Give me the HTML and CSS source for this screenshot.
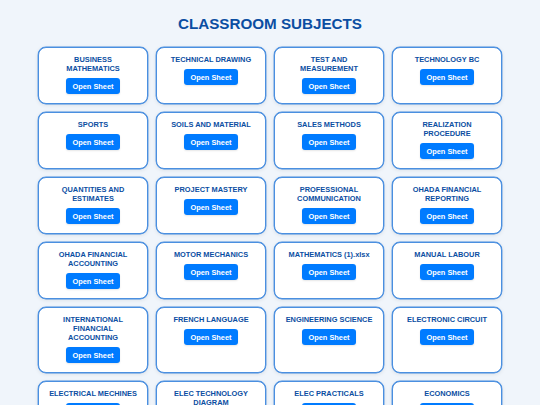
FILE: index.html
```html
<!DOCTYPE html>
<html>
<head>
<meta charset="utf-8">
<link rel="stylesheet" href="styles.css">
</head>
<body>
<h1 class="title">CLASSROOM SUBJECTS</h1>
<div class="grid">
  <div class="card"><div class="name">BUSINESS MATHEMATICS</div><button class="btn">Open Sheet</button></div>
  <div class="card"><div class="name">TECHNICAL DRAWING</div><button class="btn">Open Sheet</button></div>
  <div class="card"><div class="name">TEST AND MEASUREMENT</div><button class="btn">Open Sheet</button></div>
  <div class="card"><div class="name">TECHNOLOGY BC</div><button class="btn">Open Sheet</button></div>
  <div class="card"><div class="name">SPORTS</div><button class="btn">Open Sheet</button></div>
  <div class="card"><div class="name">SOILS AND MATERIAL</div><button class="btn">Open Sheet</button></div>
  <div class="card"><div class="name">SALES METHODS</div><button class="btn">Open Sheet</button></div>
  <div class="card"><div class="name">REALIZATION PROCEDURE</div><button class="btn">Open Sheet</button></div>
  <div class="card"><div class="name">QUANTITIES AND ESTIMATES</div><button class="btn">Open Sheet</button></div>
  <div class="card"><div class="name">PROJECT MASTERY</div><button class="btn">Open Sheet</button></div>
  <div class="card"><div class="name">PROFESSIONAL COMMUNICATION</div><button class="btn">Open Sheet</button></div>
  <div class="card"><div class="name">OHADA FINANCIAL REPORTING</div><button class="btn">Open Sheet</button></div>
  <div class="card"><div class="name">OHADA FINANCIAL ACCOUNTING</div><button class="btn">Open Sheet</button></div>
  <div class="card"><div class="name">MOTOR MECHANICS</div><button class="btn">Open Sheet</button></div>
  <div class="card"><div class="name">MATHEMATICS (1).xlsx</div><button class="btn">Open Sheet</button></div>
  <div class="card"><div class="name">MANUAL LABOUR</div><button class="btn">Open Sheet</button></div>
  <div class="card"><div class="name">INTERNATIONAL FINANCIAL ACCOUNTING</div><button class="btn">Open Sheet</button></div>
  <div class="card"><div class="name">FRENCH LANGUAGE</div><button class="btn">Open Sheet</button></div>
  <div class="card"><div class="name">ENGINEERING SCIENCE</div><button class="btn">Open Sheet</button></div>
  <div class="card"><div class="name">ELECTRONIC CIRCUIT</div><button class="btn">Open Sheet</button></div>
  <div class="card"><div class="name">ELECTRICAL MECHINES</div><button class="btn">Open Sheet</button></div>
  <div class="card"><div class="name">ELEC TECHNOLOGY DIAGRAM</div><button class="btn">Open Sheet</button></div>
  <div class="card"><div class="name">ELEC PRACTICALS</div><button class="btn">Open Sheet</button></div>
  <div class="card"><div class="name">ECONOMICS</div><button class="btn">Open Sheet</button></div>
</div>
</body>
</html>
```

FILE: styles.css
```css
html, body {
  margin: 0;
  padding: 0;
}
body {
  background: #f0f5fb;
  font-family: "Liberation Sans", Arial, sans-serif;
  padding: 15px 38px 20px;
}
.title {
  margin: 0 0 14px;
  text-align: center;
  color: #0b4ea2;
  font-size: 15.2px;
  font-weight: bold;
  line-height: 18px;
}
.grid {
  display: grid;
  grid-template-columns: repeat(4, 1fr);
  gap: 8px;
}
.card {
  background: #fff;
  border: 1px solid #4a8fe0;
  border-radius: 8px;
  box-shadow: 0 0 0 0.4px #4a8fe0, 0 1px 4px rgba(0, 0, 0, 0.1);
  padding: 7px 9px 9px;
  display: flex;
  flex-direction: column;
  align-items: center;
  text-align: center;
}
.name {
  color: #0b4ea2;
  font-size: 7.4px;
  font-weight: bold;
  line-height: 9px;
  margin-bottom: 5px;
}
.btn {
  font-family: inherit;
  background: #007bff;
  color: #fff;
  border: none;
  border-radius: 3px;
  font-size: 7.4px;
  font-weight: bold;
  width: 54px;
  height: 16px;
  padding: 0;
  box-shadow: 0 1px 2px rgba(0, 0, 0, 0.1);
}
```
